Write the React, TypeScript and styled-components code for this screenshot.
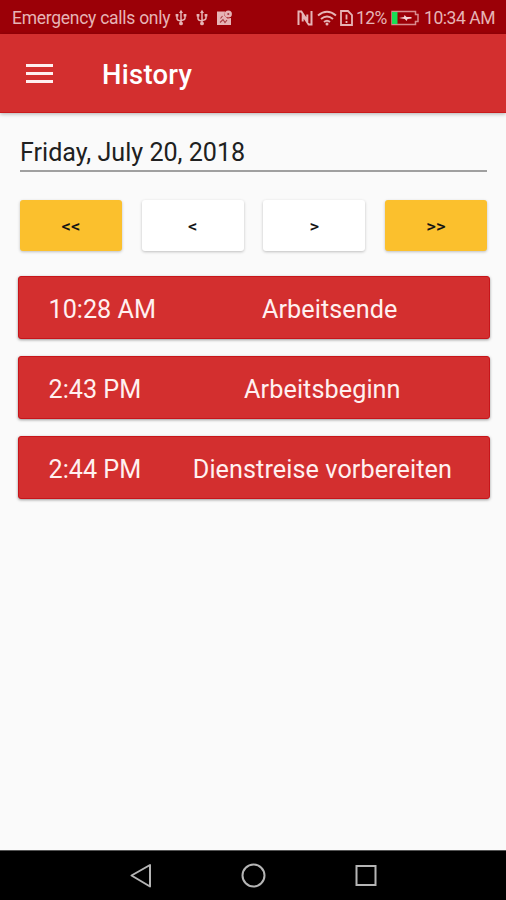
import React from "react";
import styled, { createGlobalStyle } from "styled-components";

const GlobalStyle = createGlobalStyle`
  * { box-sizing: border-box; }
  body { margin: 0; background: #fafafa; font-family: Roboto, "Noto Sans", sans-serif; }
`;

const Screen = styled.div`
  display: flex;
  flex-direction: column;
  width: 506px;
  height: 900px;
  background: #fafafa;
  overflow: hidden;
`;

const StatusBar = styled.header`
  display: flex;
  align-items: center;
  flex: none;
  height: 34px;
  padding: 2px 11px 0 12px;
  background: #9b0007;
  color: #e6b4b6;
  font-size: 17.5px;
  line-height: 20px;
  white-space: nowrap;
`;

const StatusText = styled.span<{ $width: number; $spacing?: number; $gap?: number }>`
  width: ${(p) => p.$width}px;
  margin-left: ${(p) => p.$gap ?? 0}px;
  letter-spacing: ${(p) => p.$spacing ?? 0}px;
`;

const StatusIcon = styled.svg<{ $gap?: number }>`
  flex: none;
  display: block;
  margin-left: ${(p) => p.$gap ?? 0}px;
`;

const Spacer = styled.div`
  flex: 1;
`;

const AppBar = styled.div`
  display: flex;
  align-items: center;
  flex: none;
  height: 79px;
  padding: 1px 0 0 26px;
  background: #d32f2f;
  border-bottom: 1px solid #cb1a1c;
  box-shadow: 0 1px 4px rgba(0, 0, 0, 0.3);
`;

const MenuButton = styled.button`
  display: flex;
  flex-direction: column;
  gap: 5px;
  width: 27px;
  padding: 0;
  border: 0;
  background: none;
`;

const MenuLine = styled.span`
  height: 3px;
  background: #fff0f0;
`;

const Title = styled.h1`
  margin: 2px 0 0 49px;
  color: #fff;
  font-size: 27.4px;
  font-weight: 500;
  line-height: 32px;
  letter-spacing: 0.3px;
`;

const Content = styled.main`
  flex: 1;
  padding: 23px 16px 0 18px;
`;

const DateField = styled.div`
  height: 36px;
  margin: 0 3px 0 2px;
  border-bottom: 2px solid #a0a0a0;
  color: #202020;
  font-size: 25.1px;
  line-height: 33px;
`;

const Pager = styled.div`
  display: grid;
  grid-template-columns: repeat(4, 102px);
  justify-content: space-between;
  margin: 28px 3px 0 2px;
`;

const PagerButton = styled.button<{ $accent?: boolean }>`
  height: 51px;
  padding: 2px 0 0;
  border: 0;
  border-radius: 3px;
  background: ${(p) => (p.$accent ? "#fbc02d" : "#ffffff")};
  box-shadow: 0 1px 3px rgba(0, 0, 0, 0.24);
  color: #141414;
  font: 500 18.5px/20px Roboto, sans-serif;
`;

const Arrow = styled.span`
  display: block;
  transform: scaleY(0.86);
`;

const Entries = styled.ul`
  display: flex;
  flex-direction: column;
  gap: 17px;
  margin: 25px 0 0;
  padding: 0;
  list-style: none;
`;

const Entry = styled.li`
  display: flex;
  align-items: center;
  height: 63px;
  padding: 4px 0 0 29.5px;
  border: 1px solid #c7151a;
  border-radius: 3px;
  background: #d32f2f;
  box-shadow: 0 1px 3px rgba(0, 0, 0, 0.4);
  color: #fff0f0;
  font-size: 25.2px;
  line-height: 30px;
  white-space: nowrap;
`;

const EntryLabel = styled.span`
  flex: 1;
  margin-left: 14.5px;
  letter-spacing: 0.08px;
  text-align: center;
`;

const NavBar = styled.nav`
  display: flex;
  align-items: center;
  justify-content: center;
  gap: 86px;
  flex: none;
  height: 50px;
  border-top: 1px solid #555;
  background: #000;
`;

const UsbIcon = ({ gap }: { gap: number }) => (
  <StatusIcon $gap={gap} width="12" height="18" viewBox="0 0 12 18" fill="none" stroke="#e6b4b6" strokeWidth="1.5">
    <path d="M6 3v10M2 7v2.5q0 2 4 2.5M10 7v2q0 2-4 2.5" />
    <path d="M6 .8 8 4H4zM.6 5h2.8v2.6H.6zM8.6 5h2.8v2.6H8.6z" fill="#e6b4b6" stroke="none" />
    <circle cx="6" cy="14.4" r="1.9" fill="#e6b4b6" stroke="none" />
  </StatusIcon>
);

const entries = [
  { time: "10:28 AM", label: "Arbeitsende" },
  { time: "2:43 PM", label: "Arbeitsbeginn" },
  { time: "2:44 PM", label: "Dienstreise vorbereiten" },
];

export default function App() {
  return (
    <Screen>
      <GlobalStyle />
      <StatusBar>
        <StatusText $width={159} $spacing={-0.27}>Emergency calls only</StatusText>
        <UsbIcon gap={4} />
        <UsbIcon gap={9} />
        <StatusIcon $gap={9} width="15" height="16" viewBox="0 0 15 16">
          <path d="M0 1.5h8l-.5 4 3 3 3.5-.5v7H0z" fill="#e6b4b6" />
          <circle cx="11.3" cy="4" r="3.6" fill="#e6b4b6" />
          <circle cx="11.3" cy="4" r="1.1" fill="#a83a40" />
          <path d="m3 12.5 3-3 2 3 2-2.5M3.5 8.5l2-2.5" fill="none" stroke="#a83a40" strokeWidth="1.1" />
        </StatusIcon>
        <Spacer />
        <StatusIcon width="16" height="16" viewBox="0 0 16 16" fill="none" stroke="#e6b4b6">
          <path d="M1.5 15V1.5h2.8l6 9V4.5M14.5 1v13.5h-2.8l-6-9v6" strokeWidth="2" />
        </StatusIcon>
        <StatusIcon $gap={4} width="20" height="16" viewBox="0 0 20 16" fill="none" stroke="#e6b4b6" strokeWidth="2">
          <path d="M1 5.5q9-7.5 18 0M4 9q6-5 12 0M7 12q3-2.5 6 0" />
          <circle cx="10" cy="14" r="1.5" fill="#e6b4b6" stroke="none" />
        </StatusIcon>
        <StatusIcon $gap={3} width="13" height="16" viewBox="0 0 13 16" fill="none" stroke="#e6b4b6" strokeWidth="1.8">
          <path d="M1 1h7l4 4v10H1zM6.5 4.5v5M6.5 11v2" />
        </StatusIcon>
        <StatusText $width={32} $spacing={-0.6} $gap={3}>12%</StatusText>
        <StatusIcon $gap={3} width="29" height="16" viewBox="0 0 29 16">
          <path d="M1 1.5h23.5v3H27v7h-2.5v3H1z" fill="none" stroke="#d98b8e" strokeWidth="1.5" />
          <path d="M1 2h5.5v12H1z" fill="#19df55" />
          <path d="m8 8 5-1 .5-2 2 2h5v1.5l-4 .5-.8 2-2-2z" fill="#f4d4d5" />
        </StatusIcon>
        <StatusText $width={71} $spacing={-0.45} $gap={4}>10:34 AM</StatusText>
      </StatusBar>
      <AppBar>
        <MenuButton aria-label="Menu">
          <MenuLine />
          <MenuLine />
          <MenuLine />
        </MenuButton>
        <Title>History</Title>
      </AppBar>
      <Content>
        <DateField>Friday, July 20, 2018</DateField>
        <Pager>
          <PagerButton $accent><Arrow>&lt;&lt;</Arrow></PagerButton>
          <PagerButton><Arrow>&lt;</Arrow></PagerButton>
          <PagerButton><Arrow>&gt;</Arrow></PagerButton>
          <PagerButton $accent><Arrow>&gt;&gt;</Arrow></PagerButton>
        </Pager>
        <Entries>
          {entries.map((entry) => (
            <Entry key={entry.time}>
              <span>{entry.time}</span>
              <EntryLabel>{entry.label}</EntryLabel>
            </Entry>
          ))}
        </Entries>
      </Content>
      <NavBar>
        <svg width="26" height="26" viewBox="0 0 26 26" fill="none" stroke="#b5b5b5" strokeWidth="2">
          <path d="M3.5 12.5 22 2v21.5z" strokeLinejoin="round" />
        </svg>
        <svg width="26" height="26" viewBox="0 0 26 26" fill="none" stroke="#b5b5b5" strokeWidth="2">
          <circle cx="13.5" cy="12.5" r="11" />
        </svg>
        <svg width="26" height="26" viewBox="0 0 26 26" fill="none" stroke="#b5b5b5" strokeWidth="2">
          <path d="M4.5 3h19v19h-19z" />
        </svg>
      </NavBar>
    </Screen>
  );
}
